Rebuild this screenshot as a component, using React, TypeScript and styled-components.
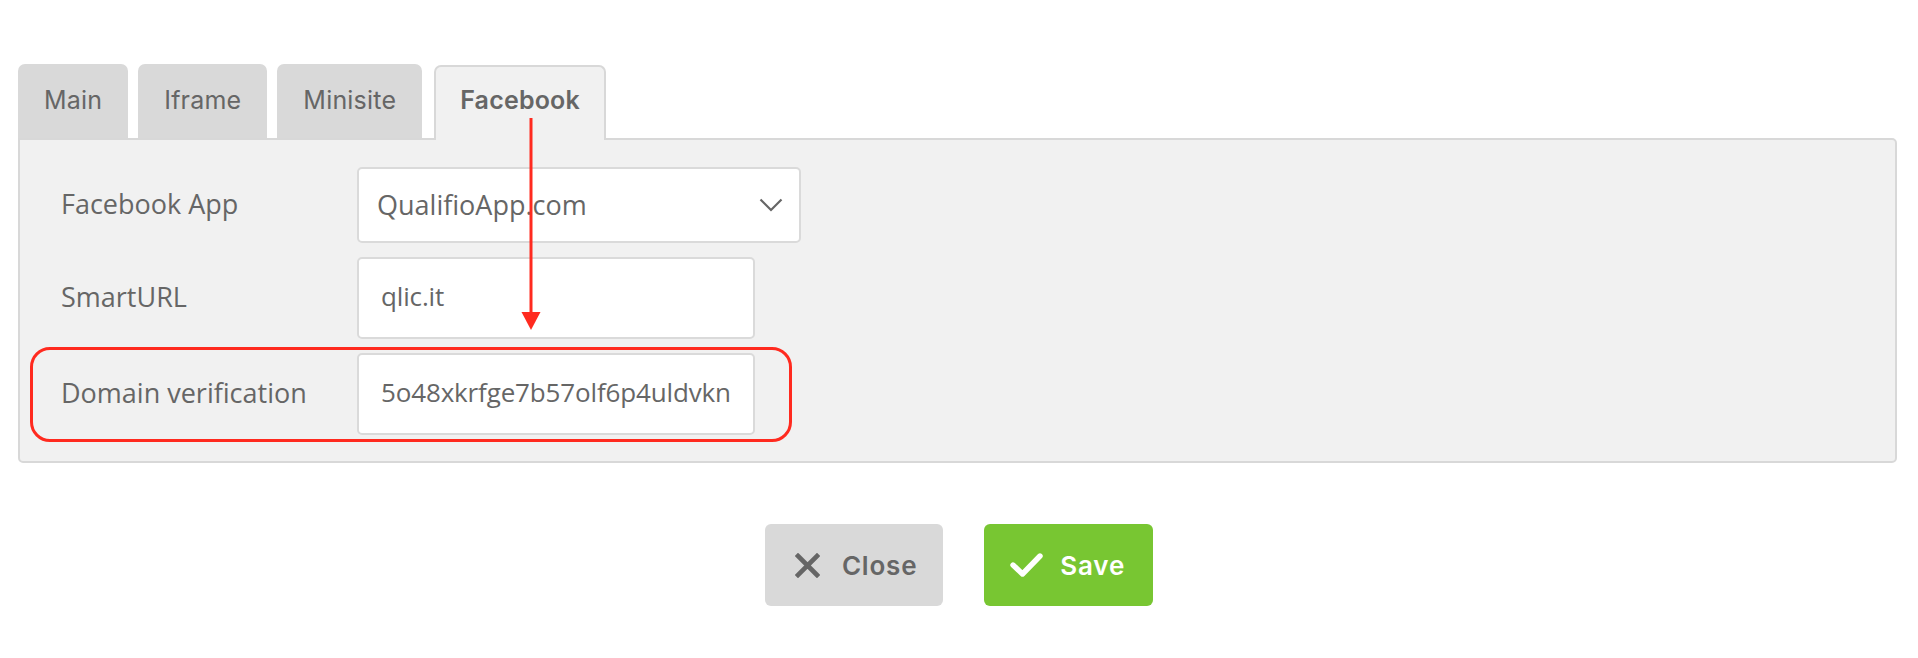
import styled, { createGlobalStyle } from "styled-components";

const GlobalStyle = createGlobalStyle`
  body {
    margin: 0;
    background: #ffffff;
    font-family: "Open Sans", "Liberation Sans", sans-serif;
  }
`;

const tabs = ["Main", "Iframe", "Minisite", "Facebook"];

function Chevron() {
    return (
        <svg width="24" height="14" viewBox="0 0 24 14" fill="none">
            <polyline points="1.5,1.5 12,12 22.5,1.5" stroke="#666" strokeWidth="2.2" />
        </svg>
    );
}

function CloseIcon() {
    return (
        <svg width="25" height="25" viewBox="0 0 25 25">
            <path d="M3 3 L22 22 M22 3 L3 22" stroke="#666" strokeWidth="4.6" strokeLinecap="square" />
        </svg>
    );
}

function CheckIcon() {
    return (
        <svg width="33" height="26" viewBox="0 0 33 26">
            <path d="M3 13 L12.5 22 L30 4" stroke="#fff" strokeWidth="5.4" fill="none" strokeLinecap="round" strokeLinejoin="round" />
        </svg>
    );
}

function Arrow() {
    return (
        <ArrowWrap>
            <svg width="20" height="212" viewBox="0 0 20 212">
                <line x1="10" y1="0" x2="10" y2="195" stroke="#ff2a1f" strokeWidth="3" />
                <polygon points="0.5,194 19.5,194 10,212" fill="#ff2a1f" />
            </svg>
        </ArrowWrap>
    );
}

function App() {
    const active = "Facebook";

    return (
        <Page>
            <GlobalStyle />
            <Editor>
                <TabBar>
                    {tabs.map((t) => (
                        <Tab key={t} $active={t === active}>
                            {t}
                        </Tab>
                    ))}
                </TabBar>
                <Panel>
                    <Row>
                        <Label>Facebook App</Label>
                        <Select>
                            <span>QualifioApp.com</span>
                            <Chevron />
                        </Select>
                    </Row>
                    <Row>
                        <Label>SmartURL</Label>
                        <Input readOnly value="qlic.it" />
                    </Row>
                    <Row>
                        <Highlight />
                        <Label>Domain verification</Label>
                        <Input readOnly value="5o48xkrfge7b57olf6p4uldvkn" />
                    </Row>
                </Panel>
                <Arrow />
            </Editor>
            <Footer>
                <Button>
                    <CloseIcon />
                    Close
                </Button>
                <Button $primary>
                    <CheckIcon />
                    Save
                </Button>
            </Footer>
        </Page>
    );
}

export default App;

const Page = styled.div`
    padding: 64px 21px 40px 18px;
`;

const Editor = styled.div`
    position: relative;
`;

const TabBar = styled.div`
    display: flex;
    align-items: flex-end;
    gap: 10px;
`;

const Tab = styled.div<{ $active?: boolean }>`
    display: flex;
    align-items: center;
    box-sizing: border-box;
    height: ${(p) => (p.$active ? "75px" : "74px")};
    padding: 0 ${(p) => (p.$active ? "24px" : "26px")};
    padding-bottom: ${(p) => (p.$active ? "7px" : "2px")};
    margin-bottom: ${(p) => (p.$active ? "-2px" : "0")};
    margin-left: ${(p) => (p.$active ? "2px" : "0")};
    position: relative;
    z-index: ${(p) => (p.$active ? 1 : 0)};
    border-radius: 7px 7px 0 0;
    background: ${(p) => (p.$active ? "#f1f1f1" : "#d9d9d9")};
    border: ${(p) => (p.$active ? "2px solid #d8d8d8" : "none")};
    border-bottom: none;
    color: #666;
    font-family: Inter, "Liberation Sans", sans-serif;
    font-size: 25px;
    font-weight: ${(p) => (p.$active ? 600 : 400)};
    letter-spacing: 0.2px;
`;

const Panel = styled.div`
    display: flex;
    flex-direction: column;
    gap: 14px;
    background: #f1f1f1;
    border: 2px solid #d8d8d8;
    border-radius: 0 5px 5px 5px;
    padding: 27px 41px 26px;
`;

const Row = styled.div`
    position: relative;
    display: grid;
    grid-template-columns: 296px auto;
    align-items: center;
`;

const Label = styled.div`
    font-size: 27px;
    color: #666;
    padding-bottom: 4px;
`;

const Select = styled.div`
    box-sizing: border-box;
    display: flex;
    align-items: center;
    justify-content: space-between;
    width: 444px;
    height: 76px;
    padding: 0 16px 0 18px;
    background: #fff;
    border: 2px solid #dadada;
    border-radius: 5px;
    font-size: 27px;
    color: #666;

    span {
        padding-bottom: 2px;
    }
`;

const Input = styled.input`
    box-sizing: border-box;
    width: 398px;
    height: 82px;
    padding: 0 0 4px 22px;
    background: #fff;
    border: 2px solid #dadada;
    border-radius: 5px;
    font-family: "Open Sans", "Liberation Sans", sans-serif;
    font-size: 26px;
    letter-spacing: -0.15px;
    color: #666;
    outline: none;
`;

const Highlight = styled.div`
    position: absolute;
    left: -31px;
    top: -6px;
    width: 762px;
    height: 95px;
    box-sizing: border-box;
    border: 3px solid #ff2a1f;
    border-radius: 20px;
    pointer-events: none;
`;

const ArrowWrap = styled.div`
    position: absolute;
    left: 503px;
    top: 54px;
    z-index: 2;
    line-height: 0;
`;

const Footer = styled.div`
    display: flex;
    justify-content: center;
    gap: 41px;
    margin-top: 61px;
    padding-left: 3px;
`;

const Button = styled.button<{ $primary?: boolean }>`
    display: flex;
    align-items: center;
    gap: ${(p) => (p.$primary ? "17px" : "22px")};
    height: 82px;
    padding: 0 ${(p) => (p.$primary ? "28px 0 26px" : "26px 0 30px")};
    border: none;
    border-radius: 6px;
    background: ${(p) => (p.$primary ? "#78c632" : "#d9d9d9")};
    color: ${(p) => (p.$primary ? "#fff" : "#666")};
    font-family: Inter, "Liberation Sans", sans-serif;
    font-size: 26px;
    font-weight: 600;
    letter-spacing: 0.8px;
    cursor: pointer;
`;
